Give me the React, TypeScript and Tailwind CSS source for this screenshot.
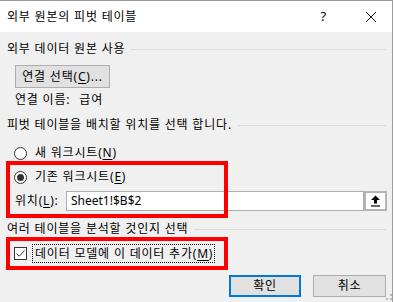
import type { ReactNode } from 'react';

const FONT = "font-['Noto_Sans','Noto_Sans_CJK_KR',sans-serif]";

/**
 * Section header with a rule to the right
 */
function GroupHeader({ children, className = '' }: { children: ReactNode; className?: string }) {
  return (
    <div className={`flex items-center h-[16px] pr-[6px] ${className}`}>
      <span className="whitespace-nowrap">{children}</span>
      <div className="flex-1 h-px bg-[#dcdcdc] ml-[6px]" />
    </div>
  );
}

function Radio({ checked }: { checked?: boolean }) {
  return (
    <div className="w-[13px] h-[13px] rounded-full border border-[#333] bg-white flex items-center justify-center">
      {checked && <div className="w-[7px] h-[7px] rounded-full bg-[#333]" />}
    </div>
  );
}

function Checkbox() {
  return (
    <div className="w-[13px] h-[13px] border border-[#333] bg-white flex items-center justify-center">
      <svg width="11" height="11" viewBox="0 0 11 11">
        <path d="M1.5 5.5 L4.2 8.2 L9.5 2.5" fill="none" stroke="#333" strokeWidth="1" />
      </svg>
    </div>
  );
}

function Key({ k }: { k: string }) {
  return (
    <>
      (<span className="underline underline-offset-2">{k}</span>)
    </>
  );
}

export default function App() {
  return (
    <div className={`relative w-[394px] h-[302px] overflow-hidden bg-white text-[12px] tracking-[0.8px] text-black ${FONT}`}>
      <div className="w-[393px] h-full border-t border-r border-[#9a9a9a] flex flex-col">
        {/* Title bar */}
        <div className="h-[31px] bg-white flex items-center pl-[7px] text-[12px]">
          <span>외부 원본의 피벗 테이블</span>
          <div className="ml-auto flex items-center">
            <span className="text-[13px] mr-[38px]">?</span>
            <svg width="12" height="12" viewBox="0 0 12 12" className="mr-[15px]">
              <path d="M1 1 L11 11 M11 1 L1 11" stroke="#111" strokeWidth="1" />
            </svg>
          </div>
        </div>

        {/* Body */}
        <div className="flex-1 bg-[#f0f0f0] pl-[7px] flex flex-col">
          <GroupHeader className="mt-[9px]">외부 데이터 원본 사용</GroupHeader>

          <div className="mt-[8px] ml-[8px] w-[95px] h-[23px] border border-[#adadad] bg-[#e1e1e1] flex items-center justify-center">
            <span>
              연결 선택<Key k="C" />...
            </span>
          </div>

          <div className="mt-[4px] ml-[8px] h-[16px] flex items-center">
            <span>연결 이름:</span>
            <span className="ml-[9px]">급여</span>
          </div>

          <GroupHeader className="mt-[9px]">피벗 테이블을 배치할 위치를 선택 합니다.</GroupHeader>

          <div className="mt-[12px] ml-[7px] h-[16px] flex items-center gap-[8px]">
            <Radio />
            <span>
              새 워크시트<Key k="N" />
            </span>
          </div>

          <div className="mt-[8px] ml-[7px] h-[16px] flex items-center gap-[8px]">
            <Radio checked />
            <span>
              기존 워크시트<Key k="E" />
            </span>
          </div>

          <div className="mt-[6px] h-[20px] flex items-center">
            <span className="ml-[8px] w-[51px]">
              위치<Key k="L" />:
            </span>
            <div className="w-[298px] h-[20px] border border-[#adadad] bg-white flex items-center pl-[4px] tracking-normal">
              Sheet1!$B$2
            </div>
            <div className="w-[23px] h-[20px] border-2 border-[#b4b4b4] bg-white flex items-center justify-center">
              <svg width="11" height="12" viewBox="0 0 11 12">
                <path d="M5.5 0.5 L10 5 L7 5 L7 8.5 L4 8.5 L4 5 L1 5 Z" fill="#000" />
                <path d="M1 11 H10" stroke="#000" strokeWidth="1.2" />
              </svg>
            </div>
          </div>

          <GroupHeader className="mt-[10px]">여러 테이블을 분석할 것인지 선택</GroupHeader>

          <div className="mt-[7px] ml-[7px] h-[19px] flex items-center">
            <Checkbox />
            <div className="ml-[5px] h-[19px] border border-dotted border-black flex items-center pl-[2px] pr-[1px] whitespace-nowrap">
              데이터 모델에 이 데이터 추가<Key k="M" />
            </div>
          </div>

          <div className="mt-[12px] flex justify-end gap-[12px] pr-[6px]">
            <div className="w-[72px] h-[22px] border-2 border-[#0078d7] bg-[#e1e1e1] flex items-center justify-center">
              확인
            </div>
            <div className="w-[73px] h-[22px] border border-[#adadad] bg-[#e1e1e1] flex items-center justify-center">
              취소
            </div>
          </div>
        </div>
      </div>

      {/* Size grip */}
      <svg width="6" height="6" viewBox="0 0 6 6" className="absolute left-[386px] top-[294px]">
        <rect x="4" y="0" width="2" height="2" fill="#b8b8b8" />
        <rect x="0" y="4" width="2" height="2" fill="#b8b8b8" />
        <rect x="4" y="4" width="2" height="2" fill="#b8b8b8" />
      </svg>

      {/* Red annotation boxes */}
      <div className="absolute left-[6px] top-[161px] w-[222px] h-[57px] border-4 border-[#ff0000]" />
      <div className="absolute left-[6px] top-[237px] w-[222px] h-[33px] border-4 border-[#ff0000]" />
    </div>
  );
}
